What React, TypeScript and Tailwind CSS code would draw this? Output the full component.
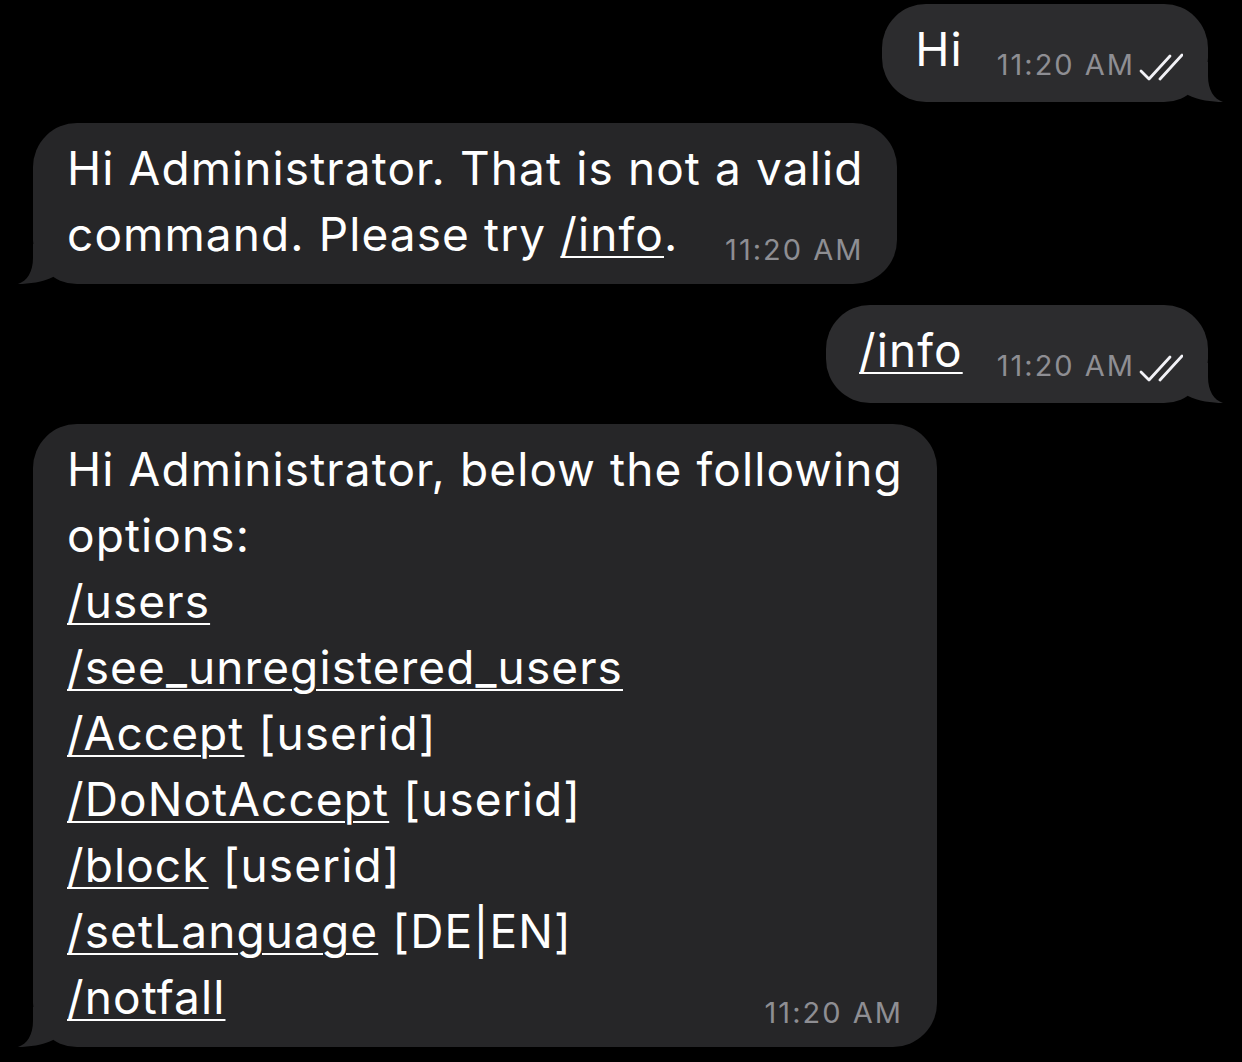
import React from 'react';

const linkCls = 'underline decoration-2 underline-offset-[5px]';

function CheckDouble() {
  return (
    <svg width="44" height="28" viewBox="0 0 44 28" fill="none" className="mb-[1px] ml-[4px]">
      <path d="M2 18 L10 26 L31 3" stroke="#f2f2f7" strokeWidth="2.8" strokeLinecap="round" strokeLinejoin="round" />
      <path d="M21 26 L43 2" stroke="#f2f2f7" strokeWidth="2.8" strokeLinecap="round" />
    </svg>
  );
}

function Time({ read }: { read?: boolean }) {
  return (
    <span className="flex shrink-0 items-end">
      <span className="text-[29px] leading-[34px] tracking-[2px] text-[#8e8e93]">11:20 AM</span>
      {read && <CheckDouble />}
    </span>
  );
}

function SentTail({ color }: { color: string }) {
  return (
    <svg width="40" height="40" viewBox="0 0 40 40" className="absolute right-[-16px] bottom-0">
      <path d="M24 0 L24 14 C24 28 30 37 39 40 C28 40 14 38 4 33 L4 0 Z" fill={color} />
    </svg>
  );
}

function ReceivedTail({ color }: { color: string }) {
  return (
    <svg width="40" height="40" viewBox="0 0 40 40" className="absolute left-[-16px] bottom-0">
      <path d="M16 0 L16 14 C16 28 10 37 1 40 C12 40 26 38 36 33 L36 0 Z" fill={color} />
    </svg>
  );
}

function Sent({ children }: { children: React.ReactNode }) {
  return (
    <div className="relative self-end rounded-[44px] bg-[#2c2c2e] pt-[12px] pr-[25px] pb-[20px] pl-[33px]">
      <SentTail color="#2c2c2e" />
      <div className="relative flex items-end gap-[34px]">
        <span className="text-[46px] leading-[66px] tracking-[1.1px] text-white">{children}</span>
        <Time read />
      </div>
    </div>
  );
}

function Received({ lines, last }: { lines: React.ReactNode[]; last: React.ReactNode }) {
  return (
    <div className="relative self-start rounded-[44px] bg-[#262628] px-[34px] pt-[12px] pb-[17px]">
      <ReceivedTail color="#262628" />
      <div className="relative flex flex-col text-[46px] leading-[66px] tracking-[1.1px] text-white">
        {lines.map((l, i) => (
          <div key={i} className="whitespace-nowrap">{l}</div>
        ))}
        <div className="flex items-end justify-between gap-[46px]">
          <span className="whitespace-nowrap">{last}</span>
          <Time />
        </div>
      </div>
    </div>
  );
}

export default function App() {
  return (
    <div className="flex min-h-screen flex-col gap-[21px] bg-black pt-[4px] pr-[34px] pl-[33px] font-['Inter','Noto_Sans',sans-serif] antialiased">
      <Sent>Hi</Sent>
      <Received
        lines={['Hi Administrator. That is not a valid']}
        last={
          <>
            command. Please try <span className={linkCls}>/info</span>.
          </>
        }
      />
      <Sent>
        <span className={linkCls}>/info</span>
      </Sent>
      <Received
        lines={[
          'Hi Administrator, below the following',
          'options:',
          <span className={linkCls}>/users</span>,
          <span className={linkCls}>/see_unregistered_users</span>,
          <>
            <span className={linkCls}>/Accept</span> [userid]
          </>,
          <>
            <span className={linkCls}>/DoNotAccept</span> [userid]
          </>,
          <>
            <span className={linkCls}>/block</span> [userid]
          </>,
          <>
            <span className={linkCls}>/setLanguage</span> [DE|EN]
          </>,
        ]}
        last={<span className={linkCls}>/notfall</span>}
      />
    </div>
  );
}
